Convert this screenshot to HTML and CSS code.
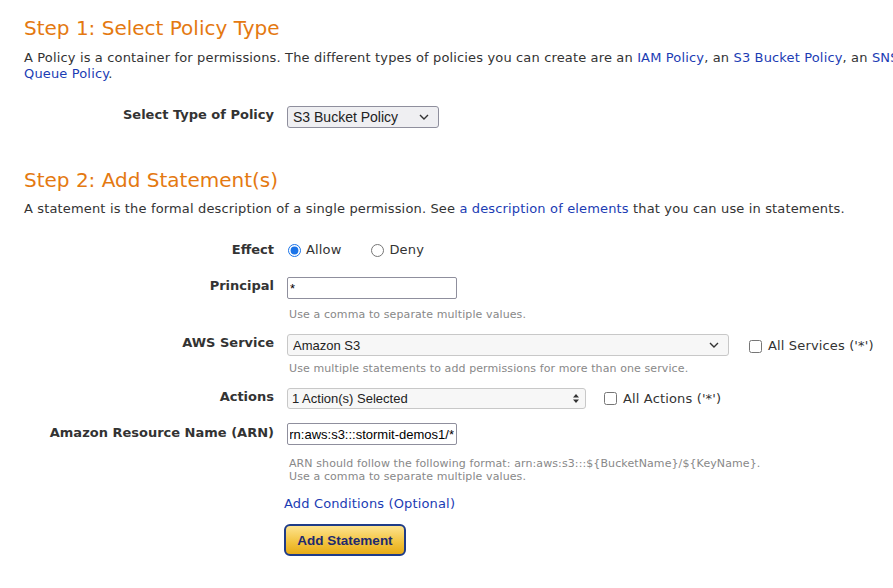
FILE: index.html
```html
<!DOCTYPE html>
<html lang="en">
<head>
<meta charset="utf-8">
<title>AWS Policy Generator</title>
<link rel="stylesheet" href="styles.css">
</head>
<body>
<div class="page">
  <h2 class="step step-first">Step 1: Select Policy Type</h2>
  <p class="intro">A Policy is a container for permissions. The different types of policies you can create are an <a href="#">IAM Policy</a>, an <a href="#">S3 Bucket Policy</a>, an <a href="#">SNS Topic Policy</a>, and an <a href="#">SQS<br>Queue Policy</a>.</p>

  <div class="row row-type">
    <label class="lbl">Select Type of Policy</label>
    <div class="ctl">
      <select class="sel sel-type"><option>S3 Bucket Policy</option></select>
    </div>
  </div>

  <h2 class="step step-second">Step 2: Add Statement(s)</h2>
  <p class="intro intro-2">A statement is the formal description of a single permission. See <a href="#">a description of elements</a> that you can use in statements.</p>

  <div class="row row-effect">
    <label class="lbl">Effect</label>
    <div class="ctl radios">
      <label class="radio"><input type="radio" name="effect" checked> Allow</label>
      <label class="radio radio-deny"><input type="radio" name="effect"> Deny</label>
    </div>
  </div>

  <div class="row row-principal">
    <label class="lbl">Principal</label>
    <div class="ctl">
      <input class="txt" type="text" value="*">
      <div class="hint hint-1">Use a comma to separate multiple values.</div>
    </div>
  </div>

  <div class="row row-service">
    <label class="lbl">AWS Service</label>
    <div class="ctl">
      <div class="inline">
        <select class="sel sel-service"><option>Amazon S3</option></select>
        <label class="check check-services"><input type="checkbox"> All Services ('*')</label>
      </div>
      <div class="hint hint-2">Use multiple statements to add permissions for more than one service.</div>
    </div>
  </div>

  <div class="row row-actions">
    <label class="lbl">Actions</label>
    <div class="ctl">
      <div class="inline">
        <select class="sel sel-actions"><option>1 Action(s) Selected</option></select>
        <label class="check check-actions"><input type="checkbox"> All Actions ('*')</label>
      </div>
    </div>
  </div>

  <div class="row row-arn">
    <label class="lbl lbl-arn">Amazon Resource Name (ARN)</label>
    <div class="ctl">
      <input class="txt" id="arn" type="text" value="arn:aws:s3:::stormit-demos1/*">
      <div class="hint hint-3">ARN should follow the following format: arn:aws:s3:::${BucketName}/${KeyName}.<br>Use a comma to separate multiple values.</div>
    </div>
  </div>

  <div class="actions-area">
    <a href="#" class="cond">Add Conditions (Optional)</a>
    <button class="btn" type="button">Add Statement</button>
  </div>
</div>
<script src="script.js"></script>
</body>
</html>
```

FILE: styles.css
```css
html, body {
  margin: 0;
  padding: 0;
  background: #fff;
  overflow: hidden;
}
body {
  font-family: "DejaVu Sans", Verdana, sans-serif;
  font-size: 13px;
  color: #333;
}
a {
  color: #1b3cb4;
  text-decoration: none;
}
.page {
  padding: 0 24px;
  width: 1200px;
}
.step {
  font-size: 20px;
  line-height: 24px;
  font-weight: normal;
  color: #e47911;
  margin: 0;
}
.step-first { margin-top: 16px; }
.step-second { margin-top: 40px; }
.intro {
  margin: 10px 0 0;
  line-height: 16px;
  white-space: nowrap;
  letter-spacing: 0.15px;
}
.intro-2 { margin-top: 9px; }

.row {
  display: grid;
  grid-template-columns: 250px 1fr;
  column-gap: 13px;
  align-items: start;
}
.lbl {
  text-align: right;
  font-weight: bold;
  line-height: 16px;
  padding-top: 1px;
  white-space: nowrap;
}
.row-type { margin-top: 24px; }
.row-effect { margin-top: 25px; }
.row-effect .lbl { padding-top: 0; }
.row-principal { margin-top: 19px; }
.row-service { margin-top: 13px; }
.row-actions { margin-top: 13px; }
.row-arn { margin-top: 14px; }
.lbl-arn { padding-top: 2px; }

.ctl { min-width: 0; }

.radios {
  display: flex;
  align-items: center;
  height: 16px;
  letter-spacing: 0.15px;
}
.radio {
  display: flex;
  align-items: center;
  gap: 5px;
  line-height: 16px;
}
.radio input {
  margin: 0 0 0 1px;
  width: 13px;
  height: 13px;
  accent-color: #1a73e8;
}
.radio-deny { margin-left: 29px; }

.txt {
  box-sizing: border-box;
  width: 170px;
  height: 22px;
  margin: 0;
  padding: 1px 2px;
  border: 1px solid #8f8f9d;
  border-radius: 2px;
  font-family: "Liberation Sans", Arial, sans-serif;
  font-size: 13px;
  color: #000;
  background: #fff;
}

.hint {
  font-size: 11px;
  line-height: 13px;
  color: #888;
  white-space: nowrap;
  padding-left: 2px;
  letter-spacing: 0.1px;
}
.hint-1 { margin-top: 9px; }
.hint-2 { margin-top: 6px; }
.hint-3 { margin-top: 12px; }

.inline {
  display: flex;
  align-items: center;
}

.sel {
  -webkit-appearance: none;
  appearance: none;
  box-sizing: border-box;
  margin: 0;
  height: 22px;
  padding: 0 20px 0 5px;
  font-family: "Liberation Sans", Arial, sans-serif;
  font-size: 13px;
  color: #222;
  border-radius: 3px;
  background-repeat: no-repeat;
}
.sel-type {
  width: 152px;
  border: 1px solid #8f8f9d;
  background-color: #efeff2;
  font-size: 14px;
  background-image: url("data:image/svg+xml,%3Csvg xmlns='http://www.w3.org/2000/svg' width='10' height='6' viewBox='0 0 10 6'%3E%3Cpath d='M1 1l4 4 4-4' fill='none' stroke='%23333' stroke-width='1.4'/%3E%3C/svg%3E");
  background-position: right 9px center;
}
.sel-service {
  width: 442px;
  border: 1px solid #c8c8c8;
  background-color: #f7f7f7;
  background-image: url("data:image/svg+xml,%3Csvg xmlns='http://www.w3.org/2000/svg' width='10' height='6' viewBox='0 0 10 6'%3E%3Cpath d='M1 1l4 4 4-4' fill='none' stroke='%23333' stroke-width='1.4'/%3E%3C/svg%3E");
  background-position: right 9px center;
}
.sel-actions {
  width: 299px;
  height: 21px;
  border: 1px solid #c8c8c8;
  background-color: #f7f7f7;
  padding-left: 4px;
  background-image: url("data:image/svg+xml,%3Csvg xmlns='http://www.w3.org/2000/svg' width='6' height='9' viewBox='0 0 6 9'%3E%3Cpath d='M3 0l3 3.5H0zM3 9L0 5.5h6z' fill='%23333'/%3E%3C/svg%3E");
  background-position: right 6px center;
}

.check {
  display: flex;
  align-items: center;
  gap: 6px;
  line-height: 16px;
  letter-spacing: 0.15px;
}
.check input {
  margin: 0;
  width: 13px;
  height: 13px;
}
.check-services { margin-left: 20px; padding-top: 2px; }
.check-actions { margin-left: 18px; }

.actions-area {
  padding-left: 260px;
  display: flex;
  flex-direction: column;
  align-items: flex-start;
}
.cond {
  margin-top: 13px;
  line-height: 16px;
  letter-spacing: 0.15px;
}
.btn {
  margin-top: 12px;
  box-sizing: border-box;
  width: 122px;
  height: 32px;
  border: 2px solid #1f3c88;
  border-radius: 6px;
  background: linear-gradient(#fde38f, #f2c23c 60%, #e7ab16);
  color: #1e2a6e;
  font-family: "Liberation Sans", Arial, sans-serif;
  font-weight: bold;
  font-size: 13.5px;
  padding: 0;
}
```

FILE: script.js
```js
var arn = document.getElementById('arn');
arn.scrollLeft = arn.scrollWidth;
```
